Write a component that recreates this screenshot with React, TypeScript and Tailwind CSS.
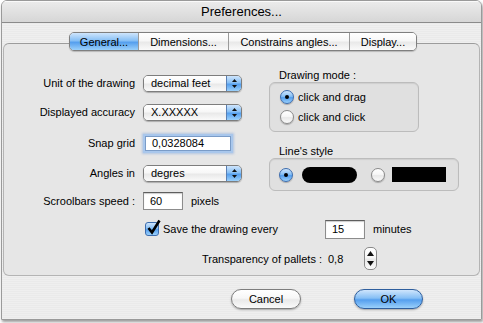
import React from 'react';

const aqua =
    'bg-[linear-gradient(to_bottom,#cfe5fc_0%,#86bff5_45%,#559fee_55%,#9ad0fb_100%)]';
const glass =
    'bg-[linear-gradient(to_bottom,#ffffff_0%,#f7f7f7_45%,#e9e9e9_55%,#fafafa_100%)]';

const UpDown = () => (
    <svg width="7" height="11" viewBox="0 0 7 11">
        <path d="M3.5 1 L6 4 L1 4 Z" fill="#111" />
        <path d="M3.5 10 L6 7 L1 7 Z" fill="#111" />
    </svg>
);

const Select = ({ value }: { value: string }) => (
    <div className="flex h-[17px] w-[99px] overflow-hidden rounded-[5px] border border-[#7d7d7d] shadow-[0_1px_1px_rgba(0,0,0,0.25)]">
        <div className={`flex flex-1 items-center pl-[7px] ${glass}`}>{value}</div>
        <div className={`flex w-[15px] items-center justify-center border-l border-[#5a7fb3] ${aqua}`}>
            <UpDown />
        </div>
    </div>
);

const Field = ({ value, w, h = 18, focus = false }: { value: string; w: number; h?: number; focus?: boolean }) => (
    <div
        className={`flex items-center border bg-white pl-[6px] ${
            focus
                ? 'border-[#7a9cc8] shadow-[0_0_0_2px_#a9c7ec,0_0_2px_3px_rgba(120,160,220,0.45)]'
                : 'border-[#8c8c8c] border-t-[#5e5e5e] shadow-[inset_0_1px_1px_rgba(0,0,0,0.2)]'
        }`}
        style={{ width: w, height: h }}
    >
        {value}
    </div>
);

const Radio = ({ checked }: { checked?: boolean }) => (
    <div
        className={`flex h-[14px] w-[14px] shrink-0 items-center justify-center rounded-full border shadow-[0_1px_1px_rgba(0,0,0,0.25)] ${
            checked ? `border-[#3c6cae] ${aqua}` : `border-[#8a8a8a] ${glass}`
        }`}
    >
        {checked && <div className="h-[4px] w-[4px] rounded-full bg-black" />}
    </div>
);

const Label = ({ children }: { children: React.ReactNode }) => (
    <div className="w-[131px] text-right">{children}</div>
);

export default function App() {
    return (
        <div className="h-[323px] w-[483px] bg-white pl-[1px] font-['Liberation_Sans',Arial,sans-serif] text-[11px] leading-[14px] text-black">
            <div className="flex h-[320px] w-[481px] flex-col overflow-hidden rounded-t-[6px] border border-[#9a9a9a] bg-[repeating-linear-gradient(0deg,#efefef_0px,#efefef_1px,#eaeaea_1px,#eaeaea_2px)] shadow-[1px_2px_3px_rgba(0,0,0,0.4)]">
                <div className="flex h-[22px] shrink-0 items-center justify-center border-b border-[#8a8a8a] bg-[linear-gradient(to_bottom,#ececec,#d6d6d6)] text-[13px] shadow-[inset_0_1px_0_#fafafa]">
                    Preferences...
                </div>

                <div className="relative z-10 mt-[9px] flex pl-[67px]">
                    <div className="flex h-[19px] overflow-hidden rounded-[5px] border border-[#7f7f7f] shadow-[0_1px_1px_rgba(0,0,0,0.2)]">
                        <div className={`flex w-[68px] items-center justify-center ${aqua}`}>General...</div>
                        <div className={`flex w-[90px] items-center justify-center border-l border-[#9a9a9a] ${glass}`}>Dimensions...</div>
                        <div className={`flex w-[121px] items-center justify-center border-l border-[#9a9a9a] ${glass}`}>Constrains angles...</div>
                        <div className={`flex w-[67px] items-center justify-center border-l border-[#9a9a9a] ${glass}`}>Display...</div>
                    </div>
                </div>

                <div className="mx-[1px] -mt-[8px] flex h-[233px] flex-col rounded-[6px] border border-[#b4b4b4] border-t-[#9c9c9c] bg-[#e6e6e6]">
                    <div className="flex">
                        <div className="flex w-[265px] flex-col pt-[30px]">
                            <div className="flex h-[18px] items-center gap-[8px]">
                                <Label>Unit of the drawing</Label>
                                <Select value="decimal feet" />
                            </div>
                            <div className="mt-[11px] flex h-[18px] items-center gap-[8px]">
                                <Label>Displayed accuracy</Label>
                                <Select value="X.XXXXX" />
                            </div>
                            <div className="mt-[13px] flex h-[18px] items-center gap-[8px]">
                                <Label>Snap grid</Label>
                                <div className="ml-[2px]">
                                    <Field value="0,0328084" w={86} h={15} focus />
                                </div>
                            </div>
                            <div className="mt-[12px] flex h-[18px] items-center gap-[8px]">
                                <Label>Angles in</Label>
                                <Select value="degres" />
                            </div>
                            <div className="mt-[10px] flex h-[18px] items-center gap-[8px]">
                                <Label>Scroolbars speed :</Label>
                                <Field value="60" w={40} />
                                <span>pixels</span>
                            </div>
                        </div>

                        <div className="flex flex-col pt-[24px]">
                            <div className="pl-[10px]">Drawing mode :</div>
                            <div className="flex h-[50px] w-[150px] flex-col rounded-[6px] border border-[#bcbcbc] bg-[#e0e0e0] pl-[10px] pt-[4px] shadow-[inset_0_1px_1px_rgba(0,0,0,0.08)]">
                                <div className="flex h-[20px] items-center gap-[4px]">
                                    <Radio checked />
                                    <span>click and drag</span>
                                </div>
                                <div className="flex h-[20px] items-center gap-[4px]">
                                    <Radio />
                                    <span>click and click</span>
                                </div>
                            </div>
                            <div className="mt-[12px] pl-[10px]">Line's style</div>
                            <div className="flex h-[33px] w-[190px] items-center rounded-[6px] border border-[#bcbcbc] bg-[#e0e0e0] pl-[9px] shadow-[inset_0_1px_1px_rgba(0,0,0,0.08)]">
                                <Radio checked />
                                <div className="ml-[9px] h-[16px] w-[55px] rounded-full bg-black" />
                                <div className="ml-[14px]">
                                    <Radio />
                                </div>
                                <div className="ml-[7px] h-[15px] w-[54px] bg-black" />
                            </div>
                        </div>
                    </div>

                    <div className="mt-[9px] flex h-[20px] items-center pl-[141px]">
                        <div className={`relative h-[14px] w-[14px] rounded-[3px] border border-[#3c6cae] ${aqua}`}>
                            <svg className="absolute -top-[4px] left-[0px]" width="16" height="16" viewBox="0 0 16 16">
                                <path d="M2.5 9 L6 13.5 L13.5 1.5" fill="none" stroke="#000" strokeWidth="2.6" />
                            </svg>
                        </div>
                        <span className="ml-[4px] w-[162px]">Save the drawing every</span>
                        <Field value="15" w={40} h={19} />
                        <span className="ml-[8px]">minutes</span>
                    </div>

                    <div className="mt-[8px] flex h-[23px] items-center">
                        <span className="w-[318px] text-right">Transparency of pallets :</span>
                        <span className="ml-[6px] w-[36px]">0,8</span>
                        <div className={`flex h-[23px] w-[13px] flex-col items-center justify-between rounded-[5px] border border-[#8a8a8a] py-[3px] ${glass}`}>
                            <svg width="7" height="5" viewBox="0 0 7 5">
                                <path d="M3.5 0 L7 5 L0 5 Z" fill="#111" />
                            </svg>
                            <svg width="7" height="5" viewBox="0 0 7 5">
                                <path d="M3.5 5 L7 0 L0 0 Z" fill="#111" />
                            </svg>
                        </div>
                    </div>
                </div>

                <div className="mt-[13px] flex pl-[229px]">
                    <div className={`flex h-[20px] w-[70px] items-center justify-center rounded-full border border-[#7d7d7d] shadow-[0_1px_2px_rgba(0,0,0,0.3)] ${glass}`}>
                        Cancel
                    </div>
                    <div className={`ml-[53px] flex h-[20px] w-[69px] items-center justify-center rounded-full border border-[#2f5f9e] shadow-[0_1px_2px_rgba(0,0,0,0.3)] ${aqua}`}>
                        OK
                    </div>
                </div>
            </div>
        </div>
    );
}
